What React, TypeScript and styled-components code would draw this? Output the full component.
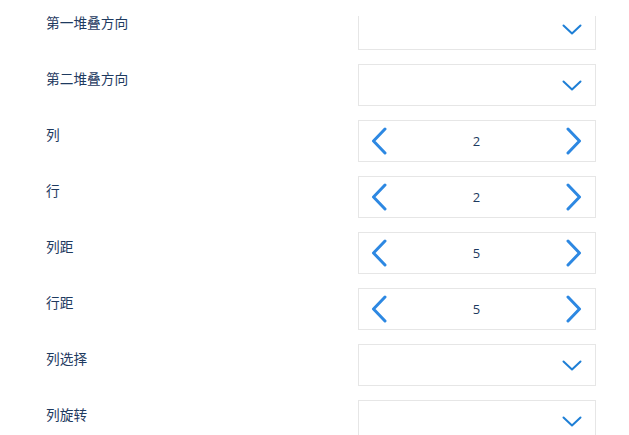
import React from "react";
import styled, { createGlobalStyle } from "styled-components";

const Global = createGlobalStyle`
  html, body { margin: 0; padding: 0; background: #ffffff; }
  body { font-family: "Noto Sans", "Noto Sans CJK SC", sans-serif; overflow: hidden; }
`;

const Page = styled.div`
  position: relative;
  width: 629px;
  height: 435px;
  overflow: hidden;
  background: #fff;
`;

const TopMask = styled.div`
  position: absolute;
  top: 0;
  left: 0;
  right: 0;
  height: 16px;
  background: #fff;
  z-index: 2;
`;

const List = styled.div`
  display: flex;
  flex-direction: column;
  gap: 14px;
  padding-top: 8px;
`;

const Row = styled.div`
  display: flex;
  align-items: flex-start;
  height: 42px;
`;

const Label = styled.div`
  width: 312px;
  padding-left: 46px;
  margin-top: 4px;
  font-family: "Noto Sans CJK SC", "Noto Sans", sans-serif;
  font-size: 13.7px;
  line-height: 20px;
  color: #1e3a5f;
`;

const Field = styled.div`
  box-sizing: border-box;
  width: 238px;
  height: 42px;
  border: 1px solid #e6e6e6;
  display: flex;
  align-items: center;
  justify-content: space-between;
  background: #fff;
`;

const SelectField = styled(Field)`
  justify-content: flex-end;
  padding-right: 13px;
`;

const StepField = styled(Field)`
  padding: 0 13px 0 12px;
`;

const Value = styled.span`
  font-family: "Open Sans", "Noto Sans", sans-serif;
  font-size: 13px;
  color: #1e3a5f;
  flex: 1;
  text-align: center;
`;

const IconBtn = styled.span`
  display: flex;
  align-items: center;
`;

const Down = () => (
  <svg width="20" height="11" viewBox="0 0 20 11">
    <polyline points="1.5,1.5 10,9.5 18.5,1.5" fill="none" stroke="#1e7fd6" strokeWidth="2" strokeLinecap="round" strokeLinejoin="round" />
  </svg>
);

const Left = () => (
  <svg width="16" height="28" viewBox="0 0 16 28">
    <polyline points="14,2 2.5,14 14,26" fill="none" stroke="#2d88e2" strokeWidth="3" strokeLinecap="round" strokeLinejoin="round" />
  </svg>
);

const Right = () => (
  <svg width="16" height="28" viewBox="0 0 16 28">
    <polyline points="2,2 13.5,14 2,26" fill="none" stroke="#2d88e2" strokeWidth="3" strokeLinecap="round" strokeLinejoin="round" />
  </svg>
);

type Item = { label: string; kind: "select" | "step"; value?: number };

const items: Item[] = [
  { label: "第一堆叠方向", kind: "select" },
  { label: "第二堆叠方向", kind: "select" },
  { label: "列", kind: "step", value: 2 },
  { label: "行", kind: "step", value: 2 },
  { label: "列距", kind: "step", value: 5 },
  { label: "行距", kind: "step", value: 5 },
  { label: "列选择", kind: "select" },
  { label: "列旋转", kind: "select" },
];

export default function App() {
  return (
    <Page>
      <Global />
      <TopMask />
      <List>
        {items.map((it) => (
          <Row key={it.label}>
            <Label>{it.label}</Label>
            {it.kind === "select" ? (
              <SelectField>
                <Down />
              </SelectField>
            ) : (
              <StepField>
                <IconBtn><Left /></IconBtn>
                <Value>{it.value}</Value>
                <IconBtn><Right /></IconBtn>
              </StepField>
            )}
          </Row>
        ))}
      </List>
    </Page>
  );
}
